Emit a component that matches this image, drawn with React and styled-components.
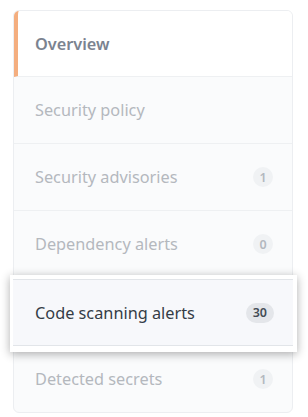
import React from "react";
import styled, { createGlobalStyle, css } from "styled-components";

const GlobalStyle = createGlobalStyle`
  html, body {
    margin: 0;
    padding: 0;
    background: #ffffff;
  }
  body {
    font-family: "Noto Sans", "Open Sans", "Liberation Sans", sans-serif;
    -webkit-font-smoothing: antialiased;
  }
`;

const Page = styled.div`
  padding: 10px 15px 4px 13px;
`;

const Menu = styled.nav`
  width: 280px;
  box-sizing: border-box;
  border: 1px solid #eceef1;
  border-radius: 6px;
  background: #fafbfc;
`;

const Row = styled.div`
  display: flex;
  align-items: center;
  justify-content: space-between;
  box-sizing: border-box;
  height: 67px;
  padding: 0 19px 0 21px;
  border-bottom: 1px solid #eef0f2;
  font-size: 16.3px;
  color: #b4b8be;

  &:last-child {
    border-bottom: none;
    height: 66px;
  }

  ${(p) =>
    p.$selected &&
    css`
      background: #ffffff;
      color: #7b8390;
      font-weight: 600;
      border-left: 4px solid #f4ae7f;
      padding-left: 17px;
      border-top-left-radius: 5px;
      border-top-right-radius: 5px;
      height: 66px;
    `}
`;

const Callout = styled.div`
  position: relative;
  z-index: 1;
  margin: -3px -5px -6px -4px;
  padding: 4px 4px 6px 3px;
  background: #ffffff;
  box-shadow: 0 2px 9px rgba(0, 0, 0, 0.32);
`;

const CalloutRow = styled(Row)`
  height: 67px;
  background: #f7f8fb;
  border-top: 1px solid #e2e5e9;
  border-bottom: 1px solid #e2e5e9;
  color: #343c46;
  padding-left: 22px;
  padding-right: 19px;

  &:last-child {
    border-bottom: 1px solid #e2e5e9;
    height: 67px;
  }
`;

const Counter = styled.span`
  display: inline-flex;
  align-items: center;
  justify-content: center;
  min-width: 20px;
  height: 20px;
  box-sizing: border-box;
  padding: 0 ${(p) => (p.$strong ? "7px" : "6px")};
  border-radius: 10px;
  font-size: 12.5px;
  font-weight: 600;
  background: ${(p) => (p.$strong ? "#e4e6ea" : "#f0f2f4")};
  color: ${(p) => (p.$strong ? "#444d56" : "#b3b8bf")};
`;

const items = [
  { label: "Overview", selected: true },
  { label: "Security policy" },
  { label: "Security advisories", count: 1 },
  { label: "Dependency alerts", count: 0 },
  { label: "Code scanning alerts", count: 30, highlight: true },
  { label: "Detected secrets", count: 1 },
];

export default function App() {
  return (
    <>
      <GlobalStyle />
      <Page>
        <Menu>
          {items.map((item) =>
            item.highlight ? (
              <Callout key={item.label}>
                <CalloutRow>
                  <span>{item.label}</span>
                  <Counter $strong>{item.count}</Counter>
                </CalloutRow>
              </Callout>
            ) : (
              <Row key={item.label} $selected={item.selected}>
                <span>{item.label}</span>
                {item.count !== undefined && <Counter>{item.count}</Counter>}
              </Row>
            )
          )}
        </Menu>
      </Page>
    </>
  );
}
